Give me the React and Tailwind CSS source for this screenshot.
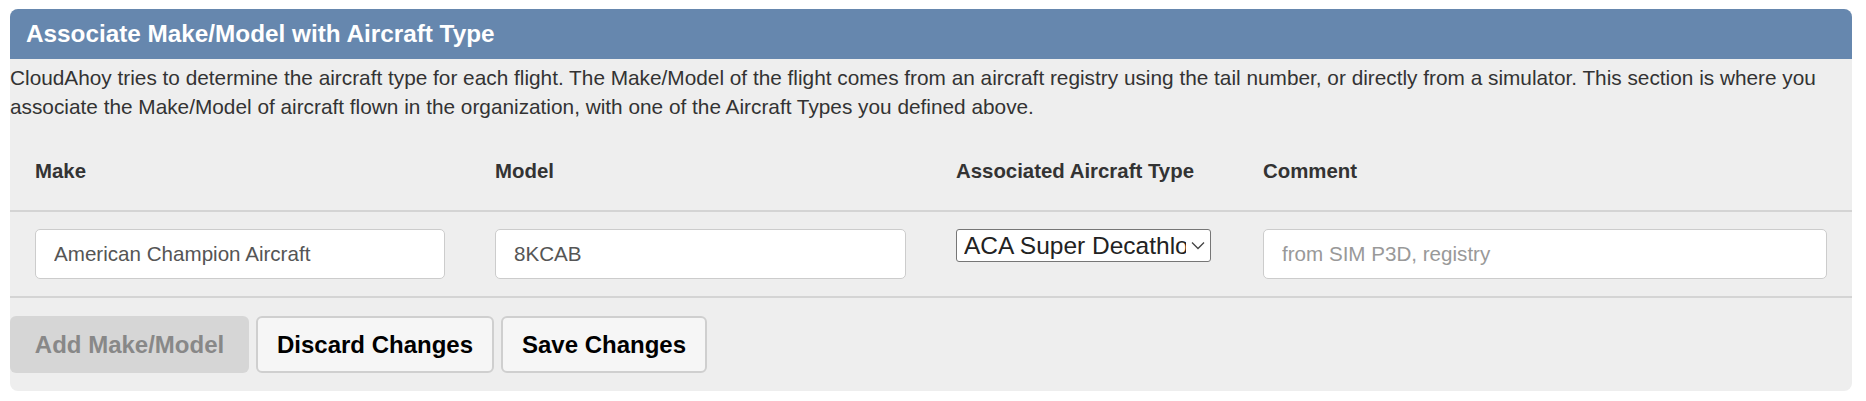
export default function App() {
  return (
    <div className="min-h-screen bg-white pt-[9px] pl-[10px]">
      <div className="w-[1842px] rounded-[8px] bg-[#eeeeee] font-['Liberation_Sans',Arial,sans-serif] text-[#333333]">
        <div className="flex h-[50px] items-center rounded-t-[8px] bg-[#6687ae] pl-[16px] text-[24.3px] font-bold text-white">
          Associate Make/Model with Aircraft Type
        </div>
        <p className="mb-[12px] pt-[4px] text-[20.8px] leading-[29px]">
          CloudAhoy tries to determine the aircraft type for each flight. The Make/Model of the flight comes from an aircraft registry using the tail number, or directly from a simulator. This section is where you associate the Make/Model of aircraft flown in the organization, with one of the Aircraft Types you defined above.
        </p>
        <div className="grid grid-cols-[460px_461px_307px_1fr]">
          <div className="flex h-[79px] items-center border-b-2 border-[#d4d4d4] px-[25px] text-[20.4px] font-bold">Make</div>
          <div className="flex h-[79px] items-center border-b-2 border-[#d4d4d4] px-[25px] text-[20.4px] font-bold">Model</div>
          <div className="flex h-[79px] items-center border-b-2 border-[#d4d4d4] px-[25px] text-[20.4px] font-bold">Associated Aircraft Type</div>
          <div className="flex h-[79px] items-center border-b-2 border-[#d4d4d4] px-[25px] text-[20.4px] font-bold">Comment</div>

          <div className="border-b-2 border-[#d4d4d4] px-[25px] pt-[17px] pb-[17px]">
            <input
              type="text"
              defaultValue="American Champion Aircraft"
              className="h-[50px] w-full rounded-[5px] border border-[#cccccc] bg-white px-[18px] text-[20.6px] text-[#555555] outline-none"
            />
          </div>
          <div className="border-b-2 border-[#d4d4d4] px-[25px] pt-[17px] pb-[17px]">
            <input
              type="text"
              defaultValue="8KCAB"
              className="h-[50px] w-full rounded-[5px] border border-[#cccccc] bg-white px-[18px] text-[20.6px] text-[#555555] outline-none"
            />
          </div>
          <div className="border-b-2 border-[#d4d4d4] px-[25px] pt-[17px] pb-[17px]">
            <div className="relative h-[33px] w-[255px]">
              <select
                defaultValue="aca"
                className="h-[33px] w-full appearance-none rounded-[3px] border border-[#767676] bg-white pr-[24px] pl-[7px] text-[24.5px] leading-[31px] text-[#222222] outline-none"
              >
                <option value="aca">ACA Super Decathlon</option>
              </select>
              <svg
                className="pointer-events-none absolute top-[12px] right-[6px]"
                width="14"
                height="9"
                viewBox="0 0 14 9"
                fill="none"
              >
                <path d="M1 1.5 L7 7.5 L13 1.5" stroke="#444" strokeWidth="1.3" />
              </svg>
            </div>
          </div>
          <div className="border-b-2 border-[#d4d4d4] pr-[25px] pl-[25px] pt-[17px] pb-[17px]">
            <input
              type="text"
              placeholder="from SIM P3D, registry"
              className="h-[50px] w-full rounded-[5px] border border-[#cccccc] bg-white px-[18px] text-[20.6px] text-[#555555] placeholder:text-[#999999] outline-none"
            />
          </div>
        </div>
        <div className="flex gap-[7px] pt-[18px] pb-[18px]">
          <button className="h-[57px] w-[239px] rounded-[6px] bg-[#d6d6d6] text-[24px] font-bold text-[#888888]">
            Add Make/Model
          </button>
          <button className="h-[57px] w-[238px] rounded-[6px] border-2 border-[#cfcfcf] bg-[#f6f6f6] text-[24px] font-bold text-black">
            Discard Changes
          </button>
          <button className="h-[57px] w-[206px] rounded-[6px] border-2 border-[#cfcfcf] bg-[#f6f6f6] text-[24px] font-bold text-black">
            Save Changes
          </button>
        </div>
      </div>
    </div>
  );
}
